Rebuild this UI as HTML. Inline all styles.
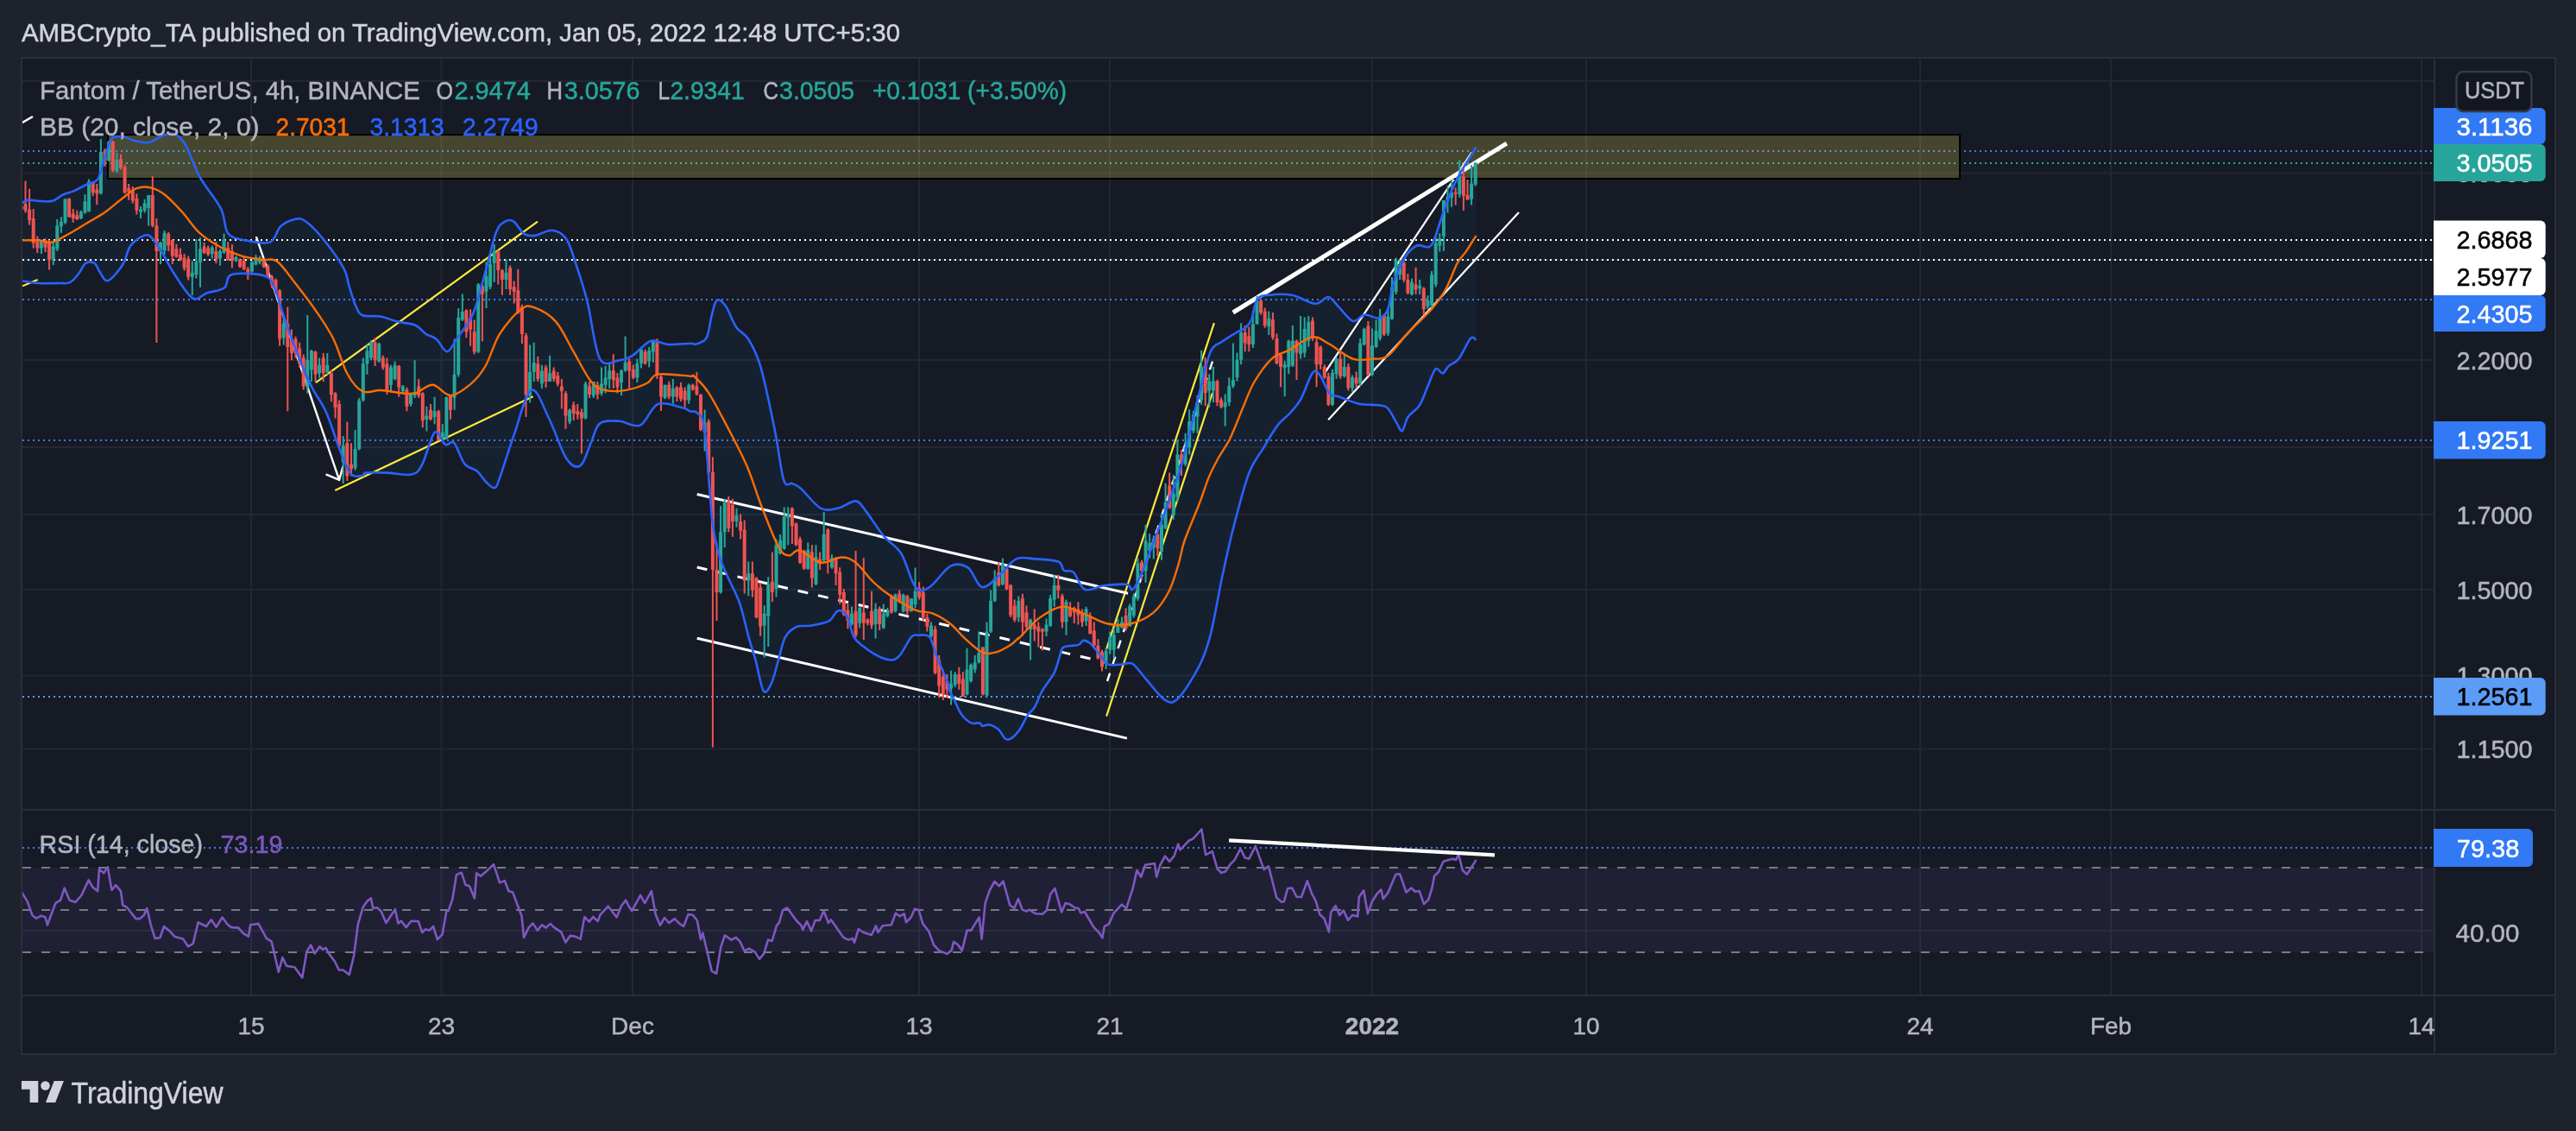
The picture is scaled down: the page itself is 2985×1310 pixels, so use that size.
<!DOCTYPE html><html><head><meta charset="utf-8"><style>html,body{margin:0;padding:0;background:#1e222d;width:2985px;height:1310px;overflow:hidden}svg{display:block;will-change:transform}text{font-family:"Liberation Sans",sans-serif}</style></head><body>
<svg width="2985" height="1310" viewBox="0 0 2985 1310">
<rect x="0" y="0" width="2985" height="1310" fill="#1e222d"/>
<rect x="25" y="67" width="2936" height="1154" fill="#161a25" stroke="#2a2e39" stroke-width="2"/>
<line x1="291" y1="68" x2="291" y2="1152" stroke="#232733" stroke-width="2"/>
<line x1="511.5" y1="68" x2="511.5" y2="1152" stroke="#232733" stroke-width="2"/>
<line x1="733" y1="68" x2="733" y2="1152" stroke="#232733" stroke-width="2"/>
<line x1="1065" y1="68" x2="1065" y2="1152" stroke="#232733" stroke-width="2"/>
<line x1="1286" y1="68" x2="1286" y2="1152" stroke="#232733" stroke-width="2"/>
<line x1="1590" y1="68" x2="1590" y2="1152" stroke="#232733" stroke-width="2"/>
<line x1="1838" y1="68" x2="1838" y2="1152" stroke="#232733" stroke-width="2"/>
<line x1="2225" y1="68" x2="2225" y2="1152" stroke="#232733" stroke-width="2"/>
<line x1="2446" y1="68" x2="2446" y2="1152" stroke="#232733" stroke-width="2"/>
<line x1="2806" y1="68" x2="2806" y2="1152" stroke="#232733" stroke-width="2"/>
<line x1="26" y1="94" x2="2820" y2="94" stroke="#232733" stroke-width="2"/>
<line x1="26" y1="200.5" x2="2820" y2="200.5" stroke="#232733" stroke-width="2"/>
<line x1="26" y1="301" x2="2820" y2="301" stroke="#232733" stroke-width="2"/>
<line x1="26" y1="417" x2="2820" y2="417" stroke="#232733" stroke-width="2"/>
<line x1="26" y1="518" x2="2820" y2="518" stroke="#232733" stroke-width="2"/>
<line x1="26" y1="596" x2="2820" y2="596" stroke="#232733" stroke-width="2"/>
<line x1="26" y1="683" x2="2820" y2="683" stroke="#232733" stroke-width="2"/>
<line x1="26" y1="782.5" x2="2820" y2="782.5" stroke="#232733" stroke-width="2"/>
<line x1="26" y1="867.5" x2="2820" y2="867.5" stroke="#232733" stroke-width="2"/>
<line x1="26" y1="1078" x2="2820" y2="1078" stroke="#232733" stroke-width="2"/>
<rect x="26" y="937" width="2934" height="2" fill="#2a2e39"/>
<rect x="26" y="1152" width="2934" height="2" fill="#2a2e39"/>
<rect x="2820" y="68" width="2" height="1152" fill="#2a2e39"/>
<defs><clipPath id="cm"><rect x="26" y="68" width="2794" height="869"/></clipPath><clipPath id="cr"><rect x="26" y="939" width="2794" height="213"/></clipPath></defs>
<g clip-path="url(#cm)">
<path d="M24.9,235.6C26.1,234.9 29.0,232.1 32.2,231.6C35.5,231.1 39.6,232.6 44.4,232.8C49.1,233.0 56.0,234.0 60.7,232.8C65.5,231.6 68.8,227.4 72.9,225.5C77.0,223.6 80.3,223.5 85.1,221.4C89.8,219.3 96.7,215.6 101.4,213.2C106.2,210.8 110.2,212.5 113.6,207.1C117.0,201.7 119.0,188.5 121.7,180.7C124.4,172.9 126.5,164.0 129.9,160.3C133.3,156.6 138.0,158.0 142.1,158.3C146.2,158.7 149.6,161.2 154.3,162.4C159.1,163.6 166.5,165.2 170.6,165.2C174.7,165.2 175.3,163.9 178.7,162.4C182.1,160.9 186.8,157.5 190.9,156.3C195.0,155.2 199.0,153.5 203.1,155.5C207.2,157.5 210.6,160.2 215.3,168.5C220.1,176.8 224.8,192.9 231.6,205.1C238.4,217.3 250.6,230.8 256.0,241.7C261.4,252.5 259.4,264.1 264.2,270.2C268.9,276.3 276.4,276.7 284.5,278.4C292.6,280.1 306.2,283.1 313.0,280.4C319.8,277.7 320.4,266.5 325.2,262.1C329.9,257.7 336.8,254.9 341.5,253.9C346.2,252.9 348.3,252.3 353.7,256.0C359.1,259.7 366.6,267.2 374.0,276.3C381.4,285.4 393.4,302.0 398.4,310.9C403.4,319.8 401.8,322.7 404.1,329.9C406.4,337.1 409.5,348.4 412.2,354.3C414.9,360.2 415.6,363.3 420.3,365.3C425.1,367.3 433.9,365.3 440.7,366.5C447.5,367.7 454.2,370.9 461.0,372.6C467.8,374.3 476.0,374.3 481.4,376.7C486.8,379.1 489.5,384.1 493.6,386.8C497.7,389.5 501.7,389.5 505.8,392.9C509.9,396.3 513.9,407.5 518.0,407.2C522.1,406.9 525.1,398.4 530.2,390.9C535.3,383.4 543.1,375.3 548.5,362.4C553.9,349.5 558.4,329.2 562.8,313.6C567.2,298.0 571.3,278.3 575.0,268.8C578.7,259.3 581.8,258.6 585.2,256.6C588.6,254.6 591.6,254.2 595.3,256.6C599.0,259.0 603.4,268.2 607.5,270.9C611.6,273.6 614.3,273.6 619.7,272.9C625.1,272.2 634.0,266.1 640.1,266.8C646.2,267.5 651.6,269.9 656.4,277.0C661.1,284.1 664.5,297.3 668.6,309.5C672.7,321.7 676.4,332.6 680.8,350.2C685.2,367.8 688.9,404.1 695.0,415.3C701.1,426.5 710.9,418.1 717.4,417.4C723.9,416.7 727.6,415.0 733.7,411.3C739.8,407.6 747.2,397.1 754.0,395.0C760.8,392.9 766.7,398.5 774.4,399.0C782.1,399.5 794.6,397.9 800.0,397.8C805.4,397.7 803.4,399.6 806.5,398.5C809.6,397.4 815.7,396.8 818.7,391.2C821.8,385.6 822.8,372.1 824.8,364.8C826.8,357.6 828.2,349.4 830.9,347.7C833.6,346.0 837.3,349.4 841.0,354.6C844.7,359.8 848.8,372.6 853.2,379.0C857.6,385.4 862.8,385.4 867.5,393.2C872.2,401.0 876.6,408.2 881.7,425.8C886.8,443.4 893.6,477.3 898.0,499.0C902.4,520.7 904.8,545.8 908.2,556.0C911.6,566.2 914.9,558.4 918.3,560.1C921.7,561.8 923.1,561.5 928.5,566.2C933.9,571.0 943.8,584.9 950.9,588.6C958.0,592.3 964.5,590.0 971.3,588.6C978.1,587.2 986.2,579.7 991.6,580.4C997.0,581.1 998.4,585.8 1003.8,592.6C1009.2,599.4 1017.4,613.0 1024.2,621.1C1031.0,629.2 1038.4,631.7 1044.5,641.5C1050.6,651.3 1055.4,673.7 1060.8,680.1C1066.2,686.5 1070.3,684.2 1077.1,680.1C1083.9,676.0 1094.0,659.4 1101.5,655.7C1109.0,652.0 1115.7,653.6 1121.8,657.7C1127.9,661.8 1132.0,678.7 1138.1,680.1C1144.2,681.5 1151.8,671.4 1158.4,665.9C1165.0,660.4 1170.8,650.5 1177.7,647.4C1184.6,644.3 1191.7,646.9 1199.8,647.4C1207.9,647.9 1220.8,648.3 1226.3,650.5C1231.8,652.7 1230.0,658.6 1232.9,660.7C1235.9,662.8 1240.0,659.2 1244.0,662.9C1248.0,666.6 1251.3,680.2 1257.2,682.8C1263.1,685.4 1271.2,679.3 1279.3,678.3C1287.4,677.3 1300.4,676.2 1305.9,677.0C1311.4,677.8 1309.6,685.1 1312.5,682.8C1315.4,680.4 1319.5,672.1 1323.5,662.9C1327.5,653.7 1332.4,639.3 1336.8,627.5C1341.2,615.7 1344.9,606.2 1350.1,592.2C1355.2,578.2 1362.5,560.5 1367.7,543.5C1372.9,526.5 1377.0,506.7 1381.0,490.5C1385.0,474.3 1388.3,460.3 1392.0,446.3C1395.7,432.3 1399.0,415.0 1403.1,406.5C1407.2,398.0 1411.2,399.2 1416.4,395.5C1421.6,391.8 1429.6,387.0 1434.0,384.4C1438.4,381.8 1440.2,382.4 1442.9,380.0C1445.6,377.6 1447.8,375.9 1450.1,370.3C1452.4,364.8 1453.4,351.5 1456.8,346.7C1460.2,341.9 1463.6,342.5 1470.3,341.7C1477.0,340.9 1488.1,340.0 1497.1,341.7C1506.0,343.4 1517.0,351.4 1524.0,351.8C1531.0,352.2 1534.7,343.4 1539.2,344.0C1543.7,344.6 1546.2,350.5 1550.9,355.1C1555.7,359.8 1562.7,370.3 1567.7,371.9C1572.8,373.5 1576.2,365.1 1581.2,364.5C1586.2,363.9 1593.5,369.6 1598.0,368.6C1602.5,367.6 1605.3,365.2 1608.1,358.5C1610.9,351.8 1611.4,338.3 1614.8,328.2C1618.2,318.1 1623.7,305.3 1628.2,298.0C1632.7,290.7 1637.2,286.5 1641.7,284.5C1646.2,282.5 1651.8,287.3 1655.1,286.2C1658.4,285.1 1659.0,284.2 1661.8,277.8C1664.6,271.4 1668.5,257.1 1671.9,247.6C1675.3,238.1 1678.6,228.5 1682.0,220.7C1685.4,212.8 1688.7,206.7 1692.1,200.5C1695.5,194.3 1699.1,188.7 1702.2,183.7C1705.3,178.7 1709.2,172.5 1710.6,170.3 L1710.6,393.8 1710.6,393.8C1709.5,393.5 1707.3,388.5 1703.9,392.1C1700.5,395.7 1694.6,410.3 1690.4,415.6C1686.2,420.9 1681.8,421.2 1678.7,424.0C1675.6,426.8 1674.4,431.8 1671.9,432.4C1669.4,433.0 1666.3,425.1 1663.5,427.4C1660.7,429.6 1658.2,438.9 1655.1,445.9C1652.0,452.9 1648.9,463.2 1645.0,469.4C1641.1,475.6 1634.9,478.0 1631.6,482.9C1628.2,487.8 1627.1,497.9 1624.9,499.0C1622.7,500.1 1621.0,494.0 1618.2,489.6C1615.4,485.2 1611.5,476.2 1608.1,472.8C1604.7,469.4 1603.6,470.2 1598.0,469.4C1592.4,468.5 1582.3,469.4 1574.5,467.7C1566.7,466.0 1556.5,461.2 1550.9,459.3C1545.3,457.4 1544.4,460.2 1540.8,456.0C1537.2,451.8 1532.4,438.0 1529.1,434.1C1525.8,430.2 1524.3,427.6 1520.7,432.4C1517.1,437.2 1511.7,454.8 1507.2,462.7C1502.7,470.6 1498.3,474.5 1493.8,479.5C1489.3,484.5 1485.3,486.2 1480.3,492.9C1475.2,499.6 1469.0,510.6 1463.5,519.8C1458.0,529.0 1453.0,533.0 1447.3,548.0C1441.6,563.0 1434.8,589.9 1429.6,609.8C1424.4,629.7 1420.8,646.7 1416.4,667.3C1412.0,687.9 1407.5,716.3 1403.1,733.6C1398.7,750.9 1396.1,758.7 1389.8,771.2C1383.5,783.7 1372.1,802.1 1365.5,808.7C1358.9,815.3 1356.3,814.6 1350.1,810.9C1343.8,807.2 1334.3,793.6 1328.0,786.6C1321.7,779.6 1317.2,771.9 1312.5,769.0C1307.8,766.1 1303.8,769.3 1300.0,769.5C1296.2,769.7 1292.4,770.3 1289.5,770.2C1286.6,770.1 1284.8,770.6 1282.5,768.8C1280.2,767.0 1277.5,762.3 1275.4,759.6C1273.3,756.9 1271.8,755.0 1269.7,752.5C1267.6,750.0 1265.1,746.6 1262.7,744.8C1260.3,743.0 1257.7,741.5 1255.6,741.9C1253.5,742.2 1252.7,745.8 1249.9,746.9C1247.1,748.0 1241.7,747.7 1238.6,748.3C1235.5,748.9 1233.4,748.0 1231.5,750.4C1229.6,752.8 1229.0,757.6 1227.3,762.4C1225.6,767.2 1224.9,773.0 1221.6,779.4C1218.3,785.8 1211.3,794.0 1207.5,800.6C1203.7,807.2 1201.8,814.3 1199.0,819.0C1196.2,823.7 1193.3,824.6 1190.5,828.9C1187.7,833.1 1185.1,840.1 1182.0,844.5C1178.9,848.9 1174.9,853.2 1172.1,855.1C1169.3,857.0 1167.7,857.6 1165.1,855.8C1162.5,854.0 1159.7,847.2 1156.6,844.5C1153.5,841.8 1149.8,840.1 1146.7,839.5C1143.6,838.9 1140.1,841.2 1138.2,840.9C1136.3,840.5 1137.5,838.0 1135.4,837.4C1133.3,836.8 1129.0,839.0 1125.5,837.4C1122.0,835.8 1117.4,832.0 1114.1,827.5C1110.8,823.0 1108.0,815.2 1105.7,810.5C1103.4,805.8 1101.2,802.5 1100.0,799.2C1098.8,796.0 1100.8,797.7 1098.3,791.0C1095.8,784.3 1088.5,768.1 1085.0,759.2C1081.5,750.4 1080.6,741.8 1077.1,737.9C1073.6,734.0 1067.3,735.8 1063.8,735.8C1060.3,735.8 1059.4,734.0 1055.9,737.9C1052.4,741.8 1046.6,754.8 1042.6,759.2C1038.6,763.6 1036.4,764.5 1032.0,764.5C1027.6,764.5 1021.4,761.9 1016.1,759.2C1010.8,756.5 1004.6,752.0 1000.2,748.5C995.8,745.0 992.6,743.6 989.5,737.9C986.4,732.2 984.7,719.2 981.6,714.1C978.5,709.0 974.5,706.5 971.0,707.4C967.5,708.3 965.7,716.5 960.4,719.4C955.1,722.3 945.4,723.6 939.2,724.7C933.0,725.8 928.1,723.8 923.2,726.0C918.3,728.2 913.5,731.5 910.0,737.9C906.5,744.3 904.6,755.6 902.0,764.5C899.4,773.4 897.0,785.0 894.1,791.0C891.2,797.0 887.9,804.7 884.8,800.3C881.7,795.9 878.4,774.9 875.5,764.5C872.6,754.1 870.6,749.0 867.5,737.9C864.4,726.8 860.9,709.6 856.9,698.1C852.9,686.6 847.7,678.3 843.7,669.0C839.7,659.7 836.1,653.9 833.0,642.4C829.9,630.9 827.8,623.9 825.1,600.0C822.4,576.1 819.4,519.2 816.6,499.0C813.8,478.8 811.3,482.5 808.5,478.7C805.7,474.9 803.0,477.5 800.0,476.4C797.0,475.3 796.9,473.7 790.6,472.3C784.3,470.9 770.3,464.8 762.2,468.2C754.1,471.6 749.3,489.3 741.8,492.6C734.3,495.9 725.2,488.1 717.4,487.8C709.6,487.5 700.4,486.4 695.0,490.6C689.6,494.8 688.5,504.9 684.8,513.0C681.1,521.1 677.3,536.4 672.6,539.4C667.9,542.4 662.5,540.4 656.4,531.3C650.3,522.1 642.8,497.7 636.0,484.5C629.2,471.3 622.5,448.5 615.7,451.9C608.9,455.3 601.4,487.8 595.3,504.8C589.2,521.8 582.7,543.7 579.0,553.7C575.3,563.8 575.6,564.4 572.9,565.1C570.2,565.8 566.2,561.0 562.8,557.7C559.4,554.4 556.7,548.9 552.6,545.5C548.5,542.1 542.8,542.8 538.4,537.4C534.0,532.0 529.8,516.7 526.1,513.0C522.4,509.3 519.7,517.0 516.0,515.0C512.3,513.0 508.2,497.1 503.8,500.8C499.4,504.5 493.9,529.3 489.5,537.4C485.1,545.5 484.1,547.9 477.3,549.6C470.5,551.3 457.6,547.9 448.8,547.6C440.0,547.3 429.2,547.0 424.4,547.6C419.6,548.2 423.0,550.8 420.0,551.0C417.0,551.2 410.9,553.8 406.6,549.0C402.3,544.2 399.1,534.4 394.4,522.5C389.6,510.6 383.5,489.9 378.1,477.7C372.7,465.5 367.2,460.1 361.8,449.3C356.4,438.5 350.9,426.2 345.5,412.6C340.1,399.0 334.0,381.4 329.3,367.9C324.6,354.3 321.2,339.4 317.1,331.3C313.0,323.2 313.0,321.2 304.8,319.0C296.6,316.8 275.6,315.8 268.2,318.2C260.8,320.6 264.9,329.8 260.1,333.3C255.4,336.8 245.8,337.4 239.7,339.4C233.6,341.4 229.6,348.9 223.5,345.5C217.4,342.1 209.2,328.1 203.1,319.0C197.0,309.9 191.2,297.7 186.8,290.6C182.4,283.5 179.4,279.4 176.7,276.3C174.0,273.2 173.3,272.2 170.6,272.2C167.9,272.2 163.8,273.9 160.4,276.3C157.0,278.7 153.2,281.4 150.2,286.5C147.1,291.6 146.3,300.4 142.1,306.8C137.9,313.2 129.4,323.7 125.0,325.1C120.6,326.5 118.2,318.4 115.6,315.0C113.0,311.6 112.2,306.5 109.5,304.8C106.8,303.1 102.3,302.8 99.3,304.8C96.2,306.8 94.2,313.3 91.2,317.0C88.2,320.7 84.7,325.4 81.0,327.2C77.3,329.0 74.9,327.9 68.8,328.0C62.7,328.1 51.7,328.5 44.4,328.0C37.1,327.5 28.1,325.6 24.9,325.1Z" fill="#2196f3" fill-opacity="0.06"/>
<line x1="26" y1="175" x2="2820" y2="175" stroke="#3d7bf5" stroke-width="2" stroke-dasharray="2 4"/>
<line x1="26" y1="189" x2="2820" y2="189" stroke="#22ab94" stroke-width="2" stroke-dasharray="2 4"/>
<line x1="26" y1="510" x2="2820" y2="510" stroke="#3d7bf5" stroke-width="2" stroke-dasharray="2 4"/>
<line x1="26" y1="807" x2="2820" y2="807" stroke="#5a9cf8" stroke-width="2" stroke-dasharray="2 4"/>
<line x1="26" y1="347" x2="2820" y2="347" stroke="#3d7bf5" stroke-width="2" stroke-dasharray="2 4"/>
<line x1="26" y1="278" x2="2820" y2="278" stroke="#ffffff" stroke-width="2" stroke-dasharray="2 4"/>
<line x1="26" y1="301" x2="2820" y2="301" stroke="#ffffff" stroke-width="2" stroke-dasharray="2 4"/>
<line x1="365.9" y1="443.2" x2="623" y2="256.6" stroke="#ffeb3b" stroke-width="2.2"/>
<line x1="388.3" y1="568" x2="617.7" y2="459.3" stroke="#ffeb3b" stroke-width="2.2"/>
<line x1="1282.1" y1="751.9" x2="1406.9" y2="374.2" stroke="#ffeb3b" stroke-width="2.2"/>
<line x1="1282.1" y1="829.6" x2="1405" y2="455" stroke="#ffeb3b" stroke-width="2.2"/>
<line x1="26.1" y1="331.3" x2="43.6" y2="324" stroke="#ffeb3b" stroke-width="2.2"/>
<line x1="807.7" y1="572.5" x2="1307" y2="687.2" stroke="#ffffff" stroke-width="3"/>
<line x1="807.7" y1="739.3" x2="1305.9" y2="855.1" stroke="#ffffff" stroke-width="3"/>
<line x1="1535.8" y1="430.8" x2="1705.5" y2="176.3" stroke="#ffffff" stroke-width="2.2"/>
<line x1="1539.2" y1="486.2" x2="1760" y2="245.9" stroke="#ffffff" stroke-width="2.2"/>
<line x1="807.7" y1="657" x2="1280.5" y2="767" stroke="#ffffff" stroke-width="3" stroke-dasharray="12 12"/>
<line x1="1283" y1="789" x2="1407.5" y2="411" stroke="#ffffff" stroke-width="2.4" stroke-dasharray="10 10"/>
<path d="M296.9 274.2L393.1 555.8M377.6 549.3L393.1 555.8L397.5 540" stroke="#fff" stroke-width="2.4" fill="none"/>
<line x1="26" y1="142" x2="38" y2="135" stroke="#fff" stroke-width="2.4"/>
<rect x="125" y="156" width="2146" height="51" fill="#f0e050" fill-opacity="0.22" stroke="#000" stroke-width="2"/>
<line x1="1428.8" y1="362" x2="1745.9" y2="166.2" stroke="#ffffff" stroke-width="5"/>
<path d="M24.9 237.5V247.0M47.9 277.2V293.9M61.7 279.9V306.9M66.3 254.0V291.1M70.9 251.2V269.7M75.5 229.8V259.5M93.9 243.7V254.0M98.5 225.2V247.5M103.1 207.5V245.6M116.9 161.1V225.2M126.2 163.0V187.1M135.4 176.9V200.1M163.0 239.1V253.0M167.6 230.7V246.5M172.2 226.1V261.4M186.0 279.9V305.9M190.6 266.9V294.8M222.8 302.2V342.1M227.4 277.2V322.6M232.0 275.3V332.8M245.8 284.6V299.4M255.0 288.4V307.6M259.6 270.6V293.9M273.5 296.6V303.5M291.9 302.1V315.8M296.5 295.2V307.6M301.1 296.6V306.2M328.7 367.9V399.4M356.3 365.1V455.6M360.9 404.9V441.9M370.1 414.5V437.8M379.3 409.0V433.7M397.7 504.9V560.0M411.6 498.1V544.7M416.2 461.1V521.4M420.8 414.5V465.2M425.4 399.4V433.7M430.0 393.9V417.2M439.2 396.7V420.0M453.0 422.7V454.2M457.6 418.6V440.5M466.8 446.0V457.0M476.0 455.6V470.7M480.6 417.2V461.1M494.4 470.7V499.5M503.6 459.7V491.2M512.8 491.2V511.8M517.4 459.7V509.0M526.6 392.5V474.8M531.2 356.9V436.4M535.8 340.5V372.0M554.3 328.1V409.0M563.5 303.5V356.9M568.1 298.0V335.0M572.7 282.9V326.8M586.5 300.7V335.0M614.1 399.4V466.6M618.7 396.7V441.9M627.9 422.7V450.1M637.1 411.7V441.9M660.1 473.4V491.2M678.5 441.9V485.7M687.8 441.9V461.1M697.0 425.4V458.3M701.6 423.9V455.4M706.2 421.1V449.9M720.0 428.0V458.1M724.6 389.6V430.7M738.4 415.6V443.0M743.0 403.3V426.6M752.2 401.9V425.2M756.8 393.7V419.7M770.6 445.8V462.2M779.8 438.9V467.7M798.2 444.4V467.7M816.6 474.6V522.5M835.1 586.0V687.5M839.7 577.8V634.0M853.5 588.8V610.7M867.3 650.5V690.2M885.7 701.2V761.5M890.3 668.3V749.1M899.5 624.4V691.6M904.1 618.9V642.2M908.7 587.4V636.8M913.3 587.4V631.3M936.3 628.5V660.1M945.5 631.3V677.9M954.7 592.9V650.5M964.0 642.2V658.7M987.0 702.5V724.5M996.2 702.5V727.2M1014.6 698.4V739.6M1023.8 699.8V728.6M1028.4 703.9V714.9M1037.6 687.5V709.4M1046.8 687.7V709.6M1056.0 693.2V708.3M1060.6 657.6V704.2M1079.0 720.6V738.4M1102.1 776.8V816.6M1106.7 778.2V796.0M1120.5 750.8V805.6M1125.1 768.6V790.5M1129.7 759.0V779.6M1134.3 731.6V768.6M1143.5 720.6V807.0M1148.1 683.6V732.9M1152.7 660.3V697.3M1161.9 646.6V678.1M1180.3 690.5V720.6M1194.1 716.5V764.5M1212.5 716.5V737.1M1217.1 689.1V726.1M1221.7 665.8V702.8M1235.5 694.6V735.7M1258.6 702.8V724.7M1281.6 750.2V775.0M1286.2 731.7V757.7M1290.8 728.0V762.6M1295.4 716.8V732.9M1300.0 714.4V728.0M1309.2 699.5V725.5M1313.8 687.2V715.6M1318.4 646.4V695.8M1327.6 608.0V674.8M1332.2 617.9V646.4M1336.8 620.4V647.6M1346.0 594.4V648.8M1350.6 559.8V613.0M1359.8 549.9V601.8M1364.4 510.0V581.2M1373.6 501.7V540.1M1378.2 474.3V526.4M1382.9 475.7V501.7M1387.5 457.9V501.7M1392.1 405.8V468.8M1401.3 433.2V471.6M1405.9 425.0V466.1M1419.7 456.5V493.5M1424.3 437.3V470.2M1428.9 397.6V449.6M1433.5 408.5V441.4M1438.1 374.3V422.2M1451.9 360.6V403.0M1456.5 342.7V375.6M1470.3 360.6V388.0M1488.7 418.1V459.2M1493.3 393.5V433.2M1497.9 377.0V425.0M1507.1 366.0V415.4M1511.7 367.4V414.0M1516.3 366.0V401.7M1544.0 427.7V470.2M1548.6 414.0V438.7M1557.8 409.9V437.3M1567.0 434.6V453.8M1576.2 392.1V446.9M1580.8 379.7V400.3M1590.0 380.5V435.6M1594.6 370.6V403.1M1599.2 357.9V394.6M1608.4 357.9V389.0M1613.0 321.1V370.6M1617.6 298.5V340.9M1622.2 301.3V324.0M1636.0 322.5V342.3M1645.2 324.0V340.9M1654.4 342.3V357.9M1659.0 314.1V357.9M1663.7 274.5V332.4M1668.3 270.2V291.4M1672.9 232.0V290.8M1677.5 215.0V246.4M1682.1 207.9V239.7M1691.3 184.9V228.7M1705.1 191.1V237.5M1709.7 188.0V215.4" stroke="#26a69a" stroke-width="2" fill="none"/>
<path d="M22.9 239.3h4V242.3h-4zM45.9 278.1h4V287.4h-4zM59.7 285.5h4V300.4h-4zM64.3 261.4h4V288.3h-4zM68.9 256.7h4V262.3h-4zM73.5 230.7h4V257.7h-4zM91.9 245.6h4V253.0h-4zM96.5 233.5h4V246.5h-4zM101.1 210.3h4V244.7h-4zM114.9 176.0h4V224.3h-4zM124.2 163.9h4V186.2h-4zM133.4 185.3h4V198.3h-4zM161.0 242.8h4V245.6h-4zM165.6 235.4h4V243.7h-4zM170.2 226.1h4V241.0h-4zM184.0 280.9h4V291.1h-4zM188.6 269.7h4V290.2h-4zM220.8 316.1h4V320.8h-4zM225.4 303.1h4V318.0h-4zM230.0 288.3h4V304.1h-4zM243.8 286.4h4V293.9h-4zM253.0 291.1h4V299.3h-4zM257.6 277.4h4V292.5h-4zM271.5 298.0h4V302.1h-4zM289.9 303.5h4V314.4h-4zM294.5 298.0h4V306.2h-4zM299.1 299.3h4V303.5h-4zM326.7 374.7h4V391.2h-4zM354.3 417.2h4V447.4h-4zM358.9 406.2h4V428.2h-4zM368.1 422.7h4V432.3h-4zM377.3 422.7h4V430.9h-4zM395.7 515.9h4V535.1h-4zM409.6 520.0h4V541.9h-4zM414.2 463.8h4V520.0h-4zM418.8 421.3h4V463.8h-4zM423.4 406.2h4V421.3h-4zM428.0 396.7h4V414.5h-4zM437.2 398.0h4V418.6h-4zM451.0 425.4h4V446.0h-4zM455.6 422.7h4V439.1h-4zM464.8 447.4h4V452.9h-4zM474.0 457.0h4V467.9h-4zM478.6 454.2h4V458.3h-4zM492.4 481.6h4V485.7h-4zM501.6 476.2h4V483.0h-4zM510.8 500.8h4V509.0h-4zM515.4 459.7h4V507.7h-4zM524.6 433.7h4V461.1h-4zM529.2 367.9h4V433.7h-4zM533.8 361.0h4V370.6h-4zM552.3 329.5h4V407.6h-4zM561.5 319.9h4V337.7h-4zM566.1 306.2h4V332.2h-4zM570.7 291.1h4V304.8h-4zM584.5 315.8h4V324.0h-4zM612.1 430.9h4V458.3h-4zM616.7 420.0h4V430.9h-4zM625.9 429.6h4V444.6h-4zM635.1 432.3h4V441.9h-4zM658.1 474.8h4V488.5h-4zM676.5 444.6h4V484.4h-4zM685.8 441.9h4V458.3h-4zM695.0 444.6h4V455.6h-4zM699.6 437.6h4V445.8h-4zM704.2 429.3h4V438.9h-4zM718.0 429.3h4V443.0h-4zM722.6 419.7h4V429.3h-4zM736.4 421.1h4V437.6h-4zM741.0 404.7h4V421.1h-4zM750.2 406.0h4V418.4h-4zM754.8 395.1h4V407.4h-4zM768.6 445.8h4V460.9h-4zM777.8 449.9h4V459.5h-4zM796.2 445.8h4V463.6h-4zM814.6 489.6h4V500.6h-4zM833.1 616.2h4V686.1h-4zM837.7 581.9h4V616.2h-4zM851.5 597.0h4V603.9h-4zM865.3 664.2h4V672.4h-4zM883.7 710.8h4V724.5h-4zM888.3 676.5h4V713.5h-4zM897.5 631.3h4V682.0h-4zM902.1 625.8h4V640.9h-4zM906.7 598.4h4V635.4h-4zM911.3 595.6h4V599.7h-4zM934.3 636.8h4V658.7h-4zM943.5 645.0h4V676.5h-4zM952.7 618.9h4V649.1h-4zM962.0 646.3h4V657.3h-4zM985.0 710.8h4V723.1h-4zM994.2 703.9h4V721.7h-4zM1012.6 705.3h4V723.1h-4zM1021.8 710.8h4V727.2h-4zM1026.4 708.0h4V713.5h-4zM1035.6 688.8h4V708.0h-4zM1044.8 689.1h4V708.3h-4zM1054.0 693.2h4V708.3h-4zM1058.6 685.0h4V700.1h-4zM1077.0 724.7h4V737.1h-4zM1100.1 791.9h4V797.4h-4zM1104.7 780.9h4V793.3h-4zM1118.5 775.4h4V804.2h-4zM1123.1 770.0h4V789.1h-4zM1127.7 767.2h4V775.4h-4zM1132.3 756.2h4V767.2h-4zM1141.5 731.6h4V805.6h-4zM1146.1 695.9h4V731.6h-4zM1150.7 669.9h4V695.9h-4zM1159.9 653.5h4V676.8h-4zM1178.3 695.9h4V715.1h-4zM1192.1 717.9h4V728.8h-4zM1210.5 723.4h4V731.6h-4zM1215.1 693.2h4V724.7h-4zM1219.7 678.1h4V694.6h-4zM1233.5 697.3h4V720.6h-4zM1256.6 705.5h4V719.2h-4zM1279.6 754.0h4V767.6h-4zM1284.2 737.9h4V752.7h-4zM1288.8 735.4h4V752.7h-4zM1293.4 723.0h4V732.9h-4zM1298.0 720.6h4V726.7h-4zM1307.2 702.0h4V725.5h-4zM1311.8 690.9h4V713.1h-4zM1316.4 652.5h4V693.4h-4zM1325.6 626.6h4V661.2h-4zM1330.2 629.0h4V637.7h-4zM1334.8 624.1h4V634.0h-4zM1344.0 608.0h4V638.9h-4zM1348.6 582.0h4V611.7h-4zM1357.8 572.2h4V596.9h-4zM1362.4 526.4h4V575.7h-4zM1371.6 518.2h4V537.4h-4zM1376.2 488.0h4V518.2h-4zM1380.9 479.8h4V499.0h-4zM1385.5 466.1h4V482.5h-4zM1390.1 425.0h4V463.4h-4zM1399.3 441.4h4V452.4h-4zM1403.9 441.4h4V452.4h-4zM1417.7 466.1h4V471.6h-4zM1422.3 446.9h4V466.1h-4zM1426.9 440.1h4V446.9h-4zM1431.5 416.8h4V437.3h-4zM1436.1 385.2h4V416.8h-4zM1449.9 375.6h4V398.9h-4zM1454.5 348.2h4V375.6h-4zM1468.3 368.8h4V378.4h-4zM1486.7 422.2h4V426.3h-4zM1491.3 394.8h4V425.0h-4zM1495.9 394.8h4V423.6h-4zM1505.1 398.9h4V409.9h-4zM1509.7 381.1h4V408.5h-4zM1514.3 372.9h4V394.8h-4zM1542.0 431.8h4V468.8h-4zM1546.6 415.4h4V433.2h-4zM1555.8 425.0h4V435.9h-4zM1565.0 437.3h4V449.6h-4zM1574.2 397.6h4V444.2h-4zM1578.8 381.1h4V398.9h-4zM1588.0 400.3h4V434.2h-4zM1592.6 383.3h4V401.7h-4zM1597.2 366.4h4V391.8h-4zM1606.4 366.4h4V386.1h-4zM1611.0 332.4h4V369.2h-4zM1615.6 301.3h4V338.1h-4zM1620.2 307.0h4V318.3h-4zM1634.0 326.8h4V340.9h-4zM1643.2 331.0h4V333.9h-4zM1652.4 348.0h4V355.1h-4zM1657.0 318.3h4V353.6h-4zM1661.7 281.6h4V329.6h-4zM1666.3 275.9h4V284.4h-4zM1670.9 232.0h4V273.8h-4zM1675.5 227.8h4V232.8h-4zM1680.1 223.0h4V229.0h-4zM1689.3 203.9h4V225.0h-4zM1703.1 212.8h4V230.4h-4zM1707.7 188.5h4V213.7h-4z" fill="#26a69a"/>
<path d="M29.5 209.4V246.5M34.1 218.7V260.5M38.7 241.9V287.4M43.3 273.4V292.9M52.5 276.2V292.0M57.1 278.1V312.4M80.1 229.8V252.1M84.7 241.9V257.7M89.3 243.7V254.9M107.7 210.3V227.0M112.3 213.1V237.2M121.5 172.3V192.7M130.8 163.0V199.2M140.0 178.8V196.4M144.6 190.8V224.3M149.2 213.1V231.7M153.8 215.9V235.4M158.4 224.3V248.4M176.8 203.8V263.2M181.4 253.0V396.9M195.2 268.8V291.1M199.8 277.2V305.9M204.4 282.7V298.5M209.0 287.4V302.2M213.6 293.9V313.4M218.2 296.6V324.5M236.6 280.9V293.9M241.2 284.6V296.6M250.4 279.9V305.0M264.2 280.2V302.1M268.9 282.9V310.3M278.1 299.3V310.3M282.7 298.0V313.0M287.3 308.9V324.0M305.7 299.3V310.3M310.3 306.2V321.3M314.9 318.5V333.6M319.5 322.6V341.8M324.1 335.0V400.8M333.3 355.5V476.2M337.9 381.6V417.2M342.5 389.8V414.5M347.1 396.7V425.4M351.7 410.4V451.5M365.5 406.2V441.9M374.7 409.0V441.9M383.9 428.2V465.2M388.5 454.2V484.4M393.1 463.8V520.0M402.3 488.5V557.0M407.0 513.2V551.5M434.6 391.2V424.1M443.8 411.7V428.2M448.4 414.5V457.0M462.2 422.7V459.7M471.4 448.7V476.2M485.2 439.1V461.1M489.8 454.2V495.3M499.0 467.9V487.1M508.2 474.8V510.4M522.0 458.3V485.7M540.4 358.3V391.2M545.1 358.3V400.8M549.7 370.6V410.4M558.9 329.5V395.3M577.3 289.7V329.5M581.9 311.7V341.8M591.1 307.6V341.8M595.7 325.4V351.4M600.3 311.7V363.8M604.9 352.8V398.0M609.5 385.7V483.0M623.3 413.1V441.9M632.5 422.7V448.7M641.7 425.4V441.9M646.3 430.9V447.4M650.9 439.1V473.4M655.5 452.9V496.7M664.7 465.2V487.1M669.3 467.9V485.7M673.9 473.4V525.5M683.1 441.9V461.1M692.4 441.9V462.4M710.8 410.2V449.9M715.4 432.1V455.4M729.2 415.6V449.9M733.8 422.5V438.9M747.6 404.7V422.5M761.4 392.3V438.9M766.0 434.8V475.9M775.2 441.7V462.2M784.4 447.2V465.0M789.0 443.0V465.0M793.6 448.5V471.8M802.8 444.4V452.6M807.4 430.7V458.1M812.0 456.8V499.2M821.2 485.5V548.6M825.9 529.3V865.6M830.5 628.5V719.0M844.3 575.1V616.2M848.9 577.8V621.7M858.1 595.6V624.4M862.7 602.5V687.5M871.9 650.5V691.6M876.5 668.3V716.2M881.1 675.1V736.8M894.9 639.5V697.1M917.9 587.4V629.9M922.5 605.2V632.6M927.1 621.7V653.2M931.7 636.8V660.1M940.9 631.3V680.6M950.1 639.5V660.1M959.3 612.1V664.2M968.6 645.0V677.9M973.2 657.3V699.8M977.8 682.0V713.5M982.4 699.8V728.6M991.6 638.1V738.2M1000.8 646.3V740.9M1005.4 716.2V724.5M1010.0 684.7V728.6M1019.2 702.5V730.0M1033.0 688.8V710.8M1042.2 683.4V698.4M1051.4 689.1V712.4M1065.2 674.0V694.6M1069.8 679.5V719.2M1074.4 711.0V731.6M1083.6 724.7V780.9M1088.2 759.0V808.3M1092.8 775.4V811.1M1097.4 780.9V808.3M1111.3 772.7V798.7M1115.9 778.2V807.0M1138.9 749.4V805.6M1157.3 650.7V679.5M1166.5 656.2V683.6M1171.1 676.8V715.1M1175.7 694.6V720.6M1184.9 687.7V737.1M1189.5 701.4V728.8M1198.7 705.5V742.5M1203.3 720.6V749.4M1207.9 727.5V753.5M1226.3 665.8V693.2M1230.9 687.7V727.5M1240.1 697.3V715.1M1244.8 702.8V722.0M1249.4 697.3V723.4M1254.0 705.5V726.1M1263.2 709.6V734.3M1267.8 720.6V751.5M1272.4 740.3V763.8M1277.0 752.7V777.4M1304.6 704.5V730.5M1323.0 648.8V671.1M1341.4 610.5V643.9M1355.2 547.4V589.5M1369.0 520.9V551.1M1396.7 414.0V470.2M1410.5 440.1V470.2M1415.1 460.6V472.9M1442.7 377.0V407.2M1447.3 378.4V407.2M1461.1 346.9V364.7M1465.7 356.4V379.7M1474.9 361.9V393.5M1479.5 386.6V422.2M1484.1 409.9V448.3M1502.5 393.5V440.1M1521.0 367.4V394.8M1525.6 392.1V448.3M1530.2 400.3V427.7M1534.8 422.2V438.7M1539.4 431.8V470.2M1553.2 408.5V438.7M1562.4 420.9V452.4M1571.6 430.5V449.6M1585.4 372.0V435.6M1603.8 363.5V389.0M1626.8 302.8V326.8M1631.4 316.9V340.9M1640.6 309.8V340.9M1649.8 332.4V364.9M1686.7 217.2V237.5M1695.9 194.2V243.7M1700.5 208.0V231.4" stroke="#ef5350" stroke-width="2" fill="none"/>
<path d="M27.5 236.3h4V243.7h-4zM32.1 242.8h4V254.9h-4zM36.7 253.0h4V281.8h-4zM41.3 279.9h4V287.4h-4zM50.5 278.1h4V286.4h-4zM55.1 279.9h4V300.4h-4zM78.1 229.8h4V251.2h-4zM82.7 247.5h4V253.0h-4zM87.3 249.3h4V254.0h-4zM105.7 211.3h4V223.3h-4zM110.3 219.6h4V224.3h-4zM119.5 175.1h4V186.2h-4zM128.8 163.9h4V197.3h-4zM138.0 184.3h4V194.6h-4zM142.6 193.6h4V223.3h-4zM147.2 217.8h4V222.4h-4zM151.8 221.5h4V232.6h-4zM156.4 229.8h4V243.7h-4zM174.8 226.1h4V261.4h-4zM179.4 261.4h4V291.1h-4zM193.2 270.7h4V284.6h-4zM197.8 278.1h4V296.6h-4zM202.4 288.3h4V297.6h-4zM207.0 294.8h4V301.3h-4zM211.6 298.5h4V310.6h-4zM216.2 300.4h4V320.8h-4zM234.6 285.5h4V292.9h-4zM239.2 287.4h4V294.8h-4zM248.4 291.1h4V300.4h-4zM262.2 287.0h4V300.7h-4zM266.9 291.1h4V302.1h-4zM276.1 300.7h4V308.9h-4zM280.7 302.1h4V311.7h-4zM285.3 311.7h4V315.8h-4zM303.7 300.7h4V308.9h-4zM308.3 307.6h4V319.9h-4zM312.9 319.9h4V329.5h-4zM317.5 324.0h4V339.1h-4zM322.1 336.3h4V392.5h-4zM331.3 374.7h4V402.1h-4zM335.9 392.5h4V409.0h-4zM340.5 392.5h4V409.0h-4zM345.1 403.5h4V420.0h-4zM349.7 414.5h4V447.4h-4zM363.5 407.6h4V433.7h-4zM372.7 414.5h4V432.3h-4zM381.9 432.3h4V457.0h-4zM386.5 455.6h4V472.0h-4zM391.1 467.9h4V515.9h-4zM400.3 513.2h4V551.5h-4zM405.0 537.8h4V543.3h-4zM432.6 396.7h4V417.2h-4zM441.8 414.5h4V425.4h-4zM446.4 421.3h4V452.9h-4zM460.2 424.1h4V448.7h-4zM469.4 451.5h4V470.7h-4zM483.2 447.4h4V458.3h-4zM487.8 455.6h4V487.1h-4zM497.0 474.8h4V485.7h-4zM506.2 476.2h4V509.0h-4zM520.0 458.3h4V474.8h-4zM538.4 359.6h4V384.3h-4zM543.1 367.9h4V381.6h-4zM547.7 384.3h4V407.6h-4zM556.9 330.9h4V340.5h-4zM575.3 291.1h4V313.0h-4zM579.9 313.0h4V324.0h-4zM589.1 310.3h4V335.0h-4zM593.7 332.2h4V337.7h-4zM598.3 336.3h4V362.4h-4zM602.9 355.5h4V387.1h-4zM607.5 388.4h4V457.0h-4zM621.3 421.3h4V439.1h-4zM630.5 425.4h4V441.9h-4zM639.7 429.6h4V439.1h-4zM644.3 435.0h4V444.6h-4zM648.9 447.4h4V452.9h-4zM653.5 455.6h4V481.6h-4zM662.7 469.3h4V478.9h-4zM667.3 476.2h4V480.3h-4zM671.9 477.5h4V484.4h-4zM681.1 447.4h4V457.0h-4zM690.4 446.0h4V457.0h-4zM708.8 429.3h4V440.3h-4zM713.4 437.6h4V448.5h-4zM727.2 418.4h4V429.3h-4zM731.8 428.0h4V437.6h-4zM745.6 407.4h4V421.1h-4zM759.4 396.4h4V434.8h-4zM764.0 436.2h4V459.5h-4zM773.2 445.8h4V459.5h-4zM782.4 448.5h4V459.5h-4zM787.0 448.5h4V462.2h-4zM791.6 452.6h4V463.6h-4zM800.8 445.8h4V451.3h-4zM805.4 447.2h4V456.8h-4zM810.0 456.8h4V497.9h-4zM819.2 488.3h4V547.2h-4zM823.9 547.1h4V660.1h-4zM828.5 660.1h4V686.1h-4zM842.3 580.6h4V612.1h-4zM846.9 584.7h4V603.9h-4zM856.1 603.9h4V614.8h-4zM860.7 613.5h4V672.4h-4zM869.9 664.2h4V683.4h-4zM874.5 669.6h4V714.9h-4zM879.1 680.6h4V725.8h-4zM892.9 673.8h4V686.1h-4zM915.9 588.8h4V609.3h-4zM920.5 606.6h4V631.3h-4zM925.1 624.4h4V651.8h-4zM929.7 638.1h4V658.7h-4zM938.9 639.5h4V669.6h-4zM948.1 647.7h4V653.2h-4zM957.3 613.5h4V649.1h-4zM966.6 646.3h4V664.2h-4zM971.2 662.8h4V688.8h-4zM975.8 686.1h4V712.1h-4zM980.4 706.7h4V719.0h-4zM989.6 708.0h4V735.4h-4zM998.8 709.4h4V721.7h-4zM1003.4 717.6h4V721.7h-4zM1008.0 708.0h4V724.5h-4zM1017.2 705.3h4V723.1h-4zM1031.0 691.6h4V709.4h-4zM1040.2 687.5h4V697.1h-4zM1049.4 690.5h4V708.3h-4zM1063.2 680.9h4V691.8h-4zM1067.8 686.3h4V715.1h-4zM1072.4 715.1h4V726.1h-4zM1081.6 728.8h4V779.6h-4zM1086.2 764.5h4V794.6h-4zM1090.8 783.7h4V804.2h-4zM1095.4 789.1h4V798.7h-4zM1109.3 780.9h4V791.9h-4zM1113.9 786.4h4V807.0h-4zM1136.9 749.4h4V804.2h-4zM1155.3 663.0h4V678.1h-4zM1164.5 658.9h4V682.2h-4zM1169.1 678.1h4V712.4h-4zM1173.7 701.4h4V717.9h-4zM1182.9 693.2h4V720.6h-4zM1187.5 709.6h4V726.1h-4zM1196.7 723.4h4V728.8h-4zM1201.3 726.1h4V731.6h-4zM1205.9 728.8h4V731.6h-4zM1224.3 678.1h4V683.6h-4zM1228.9 690.5h4V720.6h-4zM1238.1 704.2h4V713.8h-4zM1242.8 704.2h4V709.6h-4zM1247.4 705.5h4V712.4h-4zM1252.0 711.0h4V720.6h-4zM1261.2 713.8h4V734.3h-4zM1265.8 730.5h4V747.8h-4zM1270.4 747.8h4V762.6h-4zM1275.0 755.2h4V772.5h-4zM1302.6 713.1h4V728.0h-4zM1321.0 651.3h4V661.2h-4zM1339.4 619.1h4V635.2h-4zM1353.2 562.3h4V588.2h-4zM1367.0 526.4h4V537.4h-4zM1394.7 423.6h4V455.1h-4zM1408.5 441.4h4V466.1h-4zM1413.1 463.4h4V471.6h-4zM1440.7 385.2h4V397.6h-4zM1445.3 389.3h4V398.9h-4zM1459.1 348.2h4V361.9h-4zM1463.7 360.6h4V377.0h-4zM1472.9 370.2h4V390.7h-4zM1477.5 392.1h4V420.9h-4zM1482.1 411.3h4V425.0h-4zM1500.5 394.8h4V408.5h-4zM1519.0 371.5h4V392.1h-4zM1523.6 396.2h4V422.2h-4zM1528.2 401.7h4V422.2h-4zM1532.8 425.0h4V437.3h-4zM1537.4 435.9h4V468.8h-4zM1551.2 415.4h4V435.9h-4zM1560.4 425.0h4V449.6h-4zM1569.6 437.3h4V444.2h-4zM1583.4 377.7h4V434.2h-4zM1601.8 364.9h4V387.6h-4zM1624.8 304.2h4V324.0h-4zM1629.4 324.0h4V339.5h-4zM1638.6 329.6h4V335.3h-4zM1647.8 333.9h4V357.9h-4zM1684.7 223.0h4V224.5h-4zM1693.9 204.4h4V227.0h-4zM1698.5 226.0h4V231.4h-4z" fill="#ef5350"/>
<path d="M24.9,278.4C28.1,278.4 38.4,278.1 44.4,278.4C50.4,278.7 54.6,281.8 60.7,280.4C66.8,279.0 74.2,273.9 81.0,270.2C87.8,266.5 94.6,262.1 101.4,258.0C108.2,253.9 114.9,250.6 121.7,245.8C128.5,241.1 136.0,234.1 142.1,229.5C148.2,224.9 153.0,220.1 158.4,218.1C163.8,216.1 169.2,216.1 174.6,217.3C180.0,218.5 184.8,220.8 190.9,225.5C197.0,230.2 204.5,238.4 211.3,245.8C218.1,253.2 224.2,263.4 231.6,270.2C239.0,277.0 247.9,282.1 256.0,286.5C264.1,290.9 272.3,294.3 280.4,296.7C288.5,299.1 298.0,299.7 304.8,300.7C311.6,301.7 315.0,298.4 321.1,302.8C327.2,307.2 334.0,317.7 341.5,327.2C349.0,336.7 358.4,348.8 365.9,359.7C373.3,370.6 380.1,380.1 386.2,392.3C392.3,404.5 396.9,422.8 402.5,433.0C408.1,443.2 413.6,450.1 420.0,453.3C426.4,456.5 433.2,451.7 440.7,452.0C448.2,452.3 458.3,454.7 465.1,455.2C471.9,455.7 475.3,456.8 481.4,455.2C487.5,453.6 494.9,445.3 501.7,445.8C508.5,446.3 514.6,458.3 522.1,458.0C529.6,457.7 539.7,449.6 546.5,443.8C553.3,438.1 557.4,433.0 562.8,423.5C568.2,414.0 572.2,397.7 579.0,386.8C585.8,375.9 596.7,363.5 603.5,358.4C610.3,353.3 612.9,353.9 619.7,356.3C626.5,358.7 636.7,364.1 644.2,372.6C651.7,381.1 657.7,395.7 664.5,407.2C671.3,418.7 678.7,434.4 684.8,441.8C690.9,449.2 694.3,450.2 701.1,451.9C707.9,453.6 717.4,453.2 725.5,451.9C733.6,450.5 743.9,446.9 750.0,443.8C756.1,440.8 753.9,435.0 762.2,433.6C770.5,432.2 793.0,435.3 800.0,435.7C807.0,436.1 800.9,432.9 804.4,436.0C807.9,439.1 814.6,445.2 820.7,454.3C826.8,463.4 833.5,476.7 841.0,490.9C848.5,505.1 858.7,524.1 865.5,539.7C872.3,555.3 875.6,568.9 881.7,584.5C887.8,600.1 896.7,623.5 902.1,633.3C907.5,643.1 910.2,642.8 914.3,643.5C918.4,644.2 920.4,636.0 926.5,637.4C932.6,638.8 942.8,650.2 950.9,651.6C959.0,653.0 968.5,645.5 975.3,645.5C982.1,645.5 985.5,646.9 991.6,651.6C997.7,656.4 1005.1,667.5 1011.9,674.0C1018.7,680.5 1024.1,684.9 1032.3,690.3C1040.5,695.7 1052.7,703.2 1060.8,706.6C1068.9,710.0 1074.3,707.9 1081.1,710.6C1087.9,713.3 1095.4,718.0 1101.5,722.8C1107.6,727.5 1111.6,733.7 1117.7,739.1C1123.8,744.5 1132.0,752.7 1138.1,755.4C1144.2,758.1 1149.0,756.8 1154.4,755.4C1159.8,754.0 1166.3,750.0 1170.6,747.3C1174.9,744.6 1178.1,740.6 1180.0,739.1C1181.9,737.6 1178.1,741.9 1182.1,738.0C1186.1,734.1 1196.1,721.8 1204.2,715.9C1212.3,710.0 1221.9,703.4 1230.7,702.7C1239.5,702.0 1248.4,708.2 1257.2,711.5C1266.0,714.8 1275.0,720.7 1283.8,722.5C1292.6,724.3 1301.5,724.7 1310.3,722.5C1319.1,720.3 1329.4,715.5 1336.8,709.3C1344.2,703.0 1349.7,694.2 1354.5,685.0C1359.3,675.8 1362.5,663.6 1365.5,654.0C1368.5,644.4 1368.2,639.3 1372.2,627.5C1376.2,615.7 1385.0,595.8 1389.8,583.3C1394.6,570.8 1397.2,561.2 1400.9,552.4C1404.6,543.6 1407.9,537.7 1411.9,530.3C1416.0,522.9 1420.5,517.8 1425.2,508.2C1429.9,498.6 1435.3,483.8 1440.0,472.8C1444.7,461.9 1447.8,452.0 1453.4,442.5C1459.0,433.0 1466.9,421.8 1473.6,415.6C1480.3,409.4 1485.9,409.7 1493.8,405.5C1501.7,401.3 1512.9,391.5 1520.7,390.4C1528.5,389.3 1533.0,394.6 1540.8,398.8C1548.6,403.0 1559.3,412.8 1567.7,415.6C1576.1,418.4 1584.6,416.2 1591.3,415.6C1598.0,415.1 1601.4,417.3 1608.1,412.3C1614.8,407.3 1623.2,394.4 1631.6,385.4C1640.0,376.4 1651.2,366.9 1658.5,358.5C1665.8,350.1 1670.3,344.0 1675.3,335.0C1680.3,326.0 1684.8,312.0 1688.7,304.7C1692.6,297.4 1695.2,296.6 1698.8,291.3C1702.4,286.0 1708.6,275.9 1710.6,272.8" fill="none" stroke="#ff6d00" stroke-width="2.4" stroke-linejoin="round"/>
<path d="M24.9,235.6C26.1,234.9 29.0,232.1 32.2,231.6C35.5,231.1 39.6,232.6 44.4,232.8C49.1,233.0 56.0,234.0 60.7,232.8C65.5,231.6 68.8,227.4 72.9,225.5C77.0,223.6 80.3,223.5 85.1,221.4C89.8,219.3 96.7,215.6 101.4,213.2C106.2,210.8 110.2,212.5 113.6,207.1C117.0,201.7 119.0,188.5 121.7,180.7C124.4,172.9 126.5,164.0 129.9,160.3C133.3,156.6 138.0,158.0 142.1,158.3C146.2,158.7 149.6,161.2 154.3,162.4C159.1,163.6 166.5,165.2 170.6,165.2C174.7,165.2 175.3,163.9 178.7,162.4C182.1,160.9 186.8,157.5 190.9,156.3C195.0,155.2 199.0,153.5 203.1,155.5C207.2,157.5 210.6,160.2 215.3,168.5C220.1,176.8 224.8,192.9 231.6,205.1C238.4,217.3 250.6,230.8 256.0,241.7C261.4,252.5 259.4,264.1 264.2,270.2C268.9,276.3 276.4,276.7 284.5,278.4C292.6,280.1 306.2,283.1 313.0,280.4C319.8,277.7 320.4,266.5 325.2,262.1C329.9,257.7 336.8,254.9 341.5,253.9C346.2,252.9 348.3,252.3 353.7,256.0C359.1,259.7 366.6,267.2 374.0,276.3C381.4,285.4 393.4,302.0 398.4,310.9C403.4,319.8 401.8,322.7 404.1,329.9C406.4,337.1 409.5,348.4 412.2,354.3C414.9,360.2 415.6,363.3 420.3,365.3C425.1,367.3 433.9,365.3 440.7,366.5C447.5,367.7 454.2,370.9 461.0,372.6C467.8,374.3 476.0,374.3 481.4,376.7C486.8,379.1 489.5,384.1 493.6,386.8C497.7,389.5 501.7,389.5 505.8,392.9C509.9,396.3 513.9,407.5 518.0,407.2C522.1,406.9 525.1,398.4 530.2,390.9C535.3,383.4 543.1,375.3 548.5,362.4C553.9,349.5 558.4,329.2 562.8,313.6C567.2,298.0 571.3,278.3 575.0,268.8C578.7,259.3 581.8,258.6 585.2,256.6C588.6,254.6 591.6,254.2 595.3,256.6C599.0,259.0 603.4,268.2 607.5,270.9C611.6,273.6 614.3,273.6 619.7,272.9C625.1,272.2 634.0,266.1 640.1,266.8C646.2,267.5 651.6,269.9 656.4,277.0C661.1,284.1 664.5,297.3 668.6,309.5C672.7,321.7 676.4,332.6 680.8,350.2C685.2,367.8 688.9,404.1 695.0,415.3C701.1,426.5 710.9,418.1 717.4,417.4C723.9,416.7 727.6,415.0 733.7,411.3C739.8,407.6 747.2,397.1 754.0,395.0C760.8,392.9 766.7,398.5 774.4,399.0C782.1,399.5 794.6,397.9 800.0,397.8C805.4,397.7 803.4,399.6 806.5,398.5C809.6,397.4 815.7,396.8 818.7,391.2C821.8,385.6 822.8,372.1 824.8,364.8C826.8,357.6 828.2,349.4 830.9,347.7C833.6,346.0 837.3,349.4 841.0,354.6C844.7,359.8 848.8,372.6 853.2,379.0C857.6,385.4 862.8,385.4 867.5,393.2C872.2,401.0 876.6,408.2 881.7,425.8C886.8,443.4 893.6,477.3 898.0,499.0C902.4,520.7 904.8,545.8 908.2,556.0C911.6,566.2 914.9,558.4 918.3,560.1C921.7,561.8 923.1,561.5 928.5,566.2C933.9,571.0 943.8,584.9 950.9,588.6C958.0,592.3 964.5,590.0 971.3,588.6C978.1,587.2 986.2,579.7 991.6,580.4C997.0,581.1 998.4,585.8 1003.8,592.6C1009.2,599.4 1017.4,613.0 1024.2,621.1C1031.0,629.2 1038.4,631.7 1044.5,641.5C1050.6,651.3 1055.4,673.7 1060.8,680.1C1066.2,686.5 1070.3,684.2 1077.1,680.1C1083.9,676.0 1094.0,659.4 1101.5,655.7C1109.0,652.0 1115.7,653.6 1121.8,657.7C1127.9,661.8 1132.0,678.7 1138.1,680.1C1144.2,681.5 1151.8,671.4 1158.4,665.9C1165.0,660.4 1170.8,650.5 1177.7,647.4C1184.6,644.3 1191.7,646.9 1199.8,647.4C1207.9,647.9 1220.8,648.3 1226.3,650.5C1231.8,652.7 1230.0,658.6 1232.9,660.7C1235.9,662.8 1240.0,659.2 1244.0,662.9C1248.0,666.6 1251.3,680.2 1257.2,682.8C1263.1,685.4 1271.2,679.3 1279.3,678.3C1287.4,677.3 1300.4,676.2 1305.9,677.0C1311.4,677.8 1309.6,685.1 1312.5,682.8C1315.4,680.4 1319.5,672.1 1323.5,662.9C1327.5,653.7 1332.4,639.3 1336.8,627.5C1341.2,615.7 1344.9,606.2 1350.1,592.2C1355.2,578.2 1362.5,560.5 1367.7,543.5C1372.9,526.5 1377.0,506.7 1381.0,490.5C1385.0,474.3 1388.3,460.3 1392.0,446.3C1395.7,432.3 1399.0,415.0 1403.1,406.5C1407.2,398.0 1411.2,399.2 1416.4,395.5C1421.6,391.8 1429.6,387.0 1434.0,384.4C1438.4,381.8 1440.2,382.4 1442.9,380.0C1445.6,377.6 1447.8,375.9 1450.1,370.3C1452.4,364.8 1453.4,351.5 1456.8,346.7C1460.2,341.9 1463.6,342.5 1470.3,341.7C1477.0,340.9 1488.1,340.0 1497.1,341.7C1506.0,343.4 1517.0,351.4 1524.0,351.8C1531.0,352.2 1534.7,343.4 1539.2,344.0C1543.7,344.6 1546.2,350.5 1550.9,355.1C1555.7,359.8 1562.7,370.3 1567.7,371.9C1572.8,373.5 1576.2,365.1 1581.2,364.5C1586.2,363.9 1593.5,369.6 1598.0,368.6C1602.5,367.6 1605.3,365.2 1608.1,358.5C1610.9,351.8 1611.4,338.3 1614.8,328.2C1618.2,318.1 1623.7,305.3 1628.2,298.0C1632.7,290.7 1637.2,286.5 1641.7,284.5C1646.2,282.5 1651.8,287.3 1655.1,286.2C1658.4,285.1 1659.0,284.2 1661.8,277.8C1664.6,271.4 1668.5,257.1 1671.9,247.6C1675.3,238.1 1678.6,228.5 1682.0,220.7C1685.4,212.8 1688.7,206.7 1692.1,200.5C1695.5,194.3 1699.1,188.7 1702.2,183.7C1705.3,178.7 1709.2,172.5 1710.6,170.3" fill="none" stroke="#2962ff" stroke-width="2.6" stroke-linejoin="round"/>
<path d="M24.9,325.1C28.1,325.6 37.1,327.5 44.4,328.0C51.7,328.5 62.7,328.1 68.8,328.0C74.9,327.9 77.3,329.0 81.0,327.2C84.7,325.4 88.2,320.7 91.2,317.0C94.2,313.3 96.2,306.8 99.3,304.8C102.3,302.8 106.8,303.1 109.5,304.8C112.2,306.5 113.0,311.6 115.6,315.0C118.2,318.4 120.6,326.5 125.0,325.1C129.4,323.7 137.9,313.2 142.1,306.8C146.3,300.4 147.1,291.6 150.2,286.5C153.2,281.4 157.0,278.7 160.4,276.3C163.8,273.9 167.9,272.2 170.6,272.2C173.3,272.2 174.0,273.2 176.7,276.3C179.4,279.4 182.4,283.5 186.8,290.6C191.2,297.7 197.0,309.9 203.1,319.0C209.2,328.1 217.4,342.1 223.5,345.5C229.6,348.9 233.6,341.4 239.7,339.4C245.8,337.4 255.4,336.8 260.1,333.3C264.9,329.8 260.8,320.6 268.2,318.2C275.6,315.8 296.6,316.8 304.8,319.0C313.0,321.2 313.0,323.2 317.1,331.3C321.2,339.4 324.6,354.3 329.3,367.9C334.0,381.4 340.1,399.0 345.5,412.6C350.9,426.2 356.4,438.5 361.8,449.3C367.2,460.1 372.7,465.5 378.1,477.7C383.5,489.9 389.6,510.6 394.4,522.5C399.1,534.4 402.3,544.2 406.6,549.0C410.9,553.8 417.0,551.2 420.0,551.0C423.0,550.8 419.6,548.2 424.4,547.6C429.2,547.0 440.0,547.3 448.8,547.6C457.6,547.9 470.5,551.3 477.3,549.6C484.1,547.9 485.1,545.5 489.5,537.4C493.9,529.3 499.4,504.5 503.8,500.8C508.2,497.1 512.3,513.0 516.0,515.0C519.7,517.0 522.4,509.3 526.1,513.0C529.8,516.7 534.0,532.0 538.4,537.4C542.8,542.8 548.5,542.1 552.6,545.5C556.7,548.9 559.4,554.4 562.8,557.7C566.2,561.0 570.2,565.8 572.9,565.1C575.6,564.4 575.3,563.8 579.0,553.7C582.7,543.7 589.2,521.8 595.3,504.8C601.4,487.8 608.9,455.3 615.7,451.9C622.5,448.5 629.2,471.3 636.0,484.5C642.8,497.7 650.3,522.1 656.4,531.3C662.5,540.4 667.9,542.4 672.6,539.4C677.3,536.4 681.1,521.1 684.8,513.0C688.5,504.9 689.6,494.8 695.0,490.6C700.4,486.4 709.6,487.5 717.4,487.8C725.2,488.1 734.3,495.9 741.8,492.6C749.3,489.3 754.1,471.6 762.2,468.2C770.3,464.8 784.3,470.9 790.6,472.3C796.9,473.7 797.0,475.3 800.0,476.4C803.0,477.5 805.7,474.9 808.5,478.7C811.3,482.5 813.8,478.8 816.6,499.0C819.4,519.2 822.4,576.1 825.1,600.0C827.8,623.9 829.9,630.9 833.0,642.4C836.1,653.9 839.7,659.7 843.7,669.0C847.7,678.3 852.9,686.6 856.9,698.1C860.9,709.6 864.4,726.8 867.5,737.9C870.6,749.0 872.6,754.1 875.5,764.5C878.4,774.9 881.7,795.9 884.8,800.3C887.9,804.7 891.2,797.0 894.1,791.0C897.0,785.0 899.4,773.4 902.0,764.5C904.6,755.6 906.5,744.3 910.0,737.9C913.5,731.5 918.3,728.2 923.2,726.0C928.1,723.8 933.0,725.8 939.2,724.7C945.4,723.6 955.1,722.3 960.4,719.4C965.7,716.5 967.5,708.3 971.0,707.4C974.5,706.5 978.5,709.0 981.6,714.1C984.7,719.2 986.4,732.2 989.5,737.9C992.6,743.6 995.8,745.0 1000.2,748.5C1004.6,752.0 1010.8,756.5 1016.1,759.2C1021.4,761.9 1027.6,764.5 1032.0,764.5C1036.4,764.5 1038.6,763.6 1042.6,759.2C1046.6,754.8 1052.4,741.8 1055.9,737.9C1059.4,734.0 1060.3,735.8 1063.8,735.8C1067.3,735.8 1073.6,734.0 1077.1,737.9C1080.6,741.8 1081.5,750.4 1085.0,759.2C1088.5,768.1 1095.8,784.3 1098.3,791.0C1100.8,797.7 1098.8,796.0 1100.0,799.2C1101.2,802.5 1103.4,805.8 1105.7,810.5C1108.0,815.2 1110.8,823.0 1114.1,827.5C1117.4,832.0 1122.0,835.8 1125.5,837.4C1129.0,839.0 1133.3,836.8 1135.4,837.4C1137.5,838.0 1136.3,840.5 1138.2,840.9C1140.1,841.2 1143.6,838.9 1146.7,839.5C1149.8,840.1 1153.5,841.8 1156.6,844.5C1159.7,847.2 1162.5,854.0 1165.1,855.8C1167.7,857.6 1169.3,857.0 1172.1,855.1C1174.9,853.2 1178.9,848.9 1182.0,844.5C1185.1,840.1 1187.7,833.1 1190.5,828.9C1193.3,824.6 1196.2,823.7 1199.0,819.0C1201.8,814.3 1203.7,807.2 1207.5,800.6C1211.3,794.0 1218.3,785.8 1221.6,779.4C1224.9,773.0 1225.6,767.2 1227.3,762.4C1229.0,757.6 1229.6,752.8 1231.5,750.4C1233.4,748.0 1235.5,748.9 1238.6,748.3C1241.7,747.7 1247.1,748.0 1249.9,746.9C1252.7,745.8 1253.5,742.2 1255.6,741.9C1257.7,741.5 1260.3,743.0 1262.7,744.8C1265.1,746.6 1267.6,750.0 1269.7,752.5C1271.8,755.0 1273.3,756.9 1275.4,759.6C1277.5,762.3 1280.2,767.0 1282.5,768.8C1284.8,770.6 1286.6,770.1 1289.5,770.2C1292.4,770.3 1296.2,769.7 1300.0,769.5C1303.8,769.3 1307.8,766.1 1312.5,769.0C1317.2,771.9 1321.7,779.6 1328.0,786.6C1334.3,793.6 1343.8,807.2 1350.1,810.9C1356.3,814.6 1358.9,815.3 1365.5,808.7C1372.1,802.1 1383.5,783.7 1389.8,771.2C1396.1,758.7 1398.7,750.9 1403.1,733.6C1407.5,716.3 1412.0,687.9 1416.4,667.3C1420.8,646.7 1424.4,629.7 1429.6,609.8C1434.8,589.9 1441.6,563.0 1447.3,548.0C1453.0,533.0 1458.0,529.0 1463.5,519.8C1469.0,510.6 1475.2,499.6 1480.3,492.9C1485.3,486.2 1489.3,484.5 1493.8,479.5C1498.3,474.5 1502.7,470.6 1507.2,462.7C1511.7,454.8 1517.1,437.2 1520.7,432.4C1524.3,427.6 1525.8,430.2 1529.1,434.1C1532.4,438.0 1537.2,451.8 1540.8,456.0C1544.4,460.2 1545.3,457.4 1550.9,459.3C1556.5,461.2 1566.7,466.0 1574.5,467.7C1582.3,469.4 1592.4,468.5 1598.0,469.4C1603.6,470.2 1604.7,469.4 1608.1,472.8C1611.5,476.2 1615.4,485.2 1618.2,489.6C1621.0,494.0 1622.7,500.1 1624.9,499.0C1627.1,497.9 1628.2,487.8 1631.6,482.9C1634.9,478.0 1641.1,475.6 1645.0,469.4C1648.9,463.2 1652.0,452.9 1655.1,445.9C1658.2,438.9 1660.7,429.6 1663.5,427.4C1666.3,425.1 1669.4,433.0 1671.9,432.4C1674.4,431.8 1675.6,426.8 1678.7,424.0C1681.8,421.2 1686.2,420.9 1690.4,415.6C1694.6,410.3 1700.5,395.7 1703.9,392.1C1707.3,388.5 1709.5,393.5 1710.6,393.8" fill="none" stroke="#2962ff" stroke-width="2.6" stroke-linejoin="round"/>
</g>
<g clip-path="url(#cr)">
<rect x="26" y="1005" width="2794" height="98" fill="#7e57c2" fill-opacity="0.1"/>
<line x1="26" y1="1005" x2="2820" y2="1005" stroke="#787b86" stroke-width="2" stroke-dasharray="10 12"/>
<line x1="26" y1="1054" x2="2820" y2="1054" stroke="#787b86" stroke-width="2" stroke-dasharray="10 12"/>
<line x1="26" y1="1103" x2="2820" y2="1103" stroke="#787b86" stroke-width="2" stroke-dasharray="10 12"/>
<line x1="26" y1="982" x2="2820" y2="982" stroke="#3d7bf5" stroke-width="2" stroke-dasharray="2 4"/>
<polyline points="25.1,1033.4 31.6,1043.9 37.5,1060.2 42.1,1063.7 48.0,1060.6 52.6,1062.5 54.9,1071.3 64.3,1046.2 70.1,1042.7 74.7,1028.7 80.6,1042.7 87.5,1045.0 94.5,1036.9 102.7,1019.4 107.3,1027.5 113.2,1032.2 115.0,1006.6 120.2,1011.2 124.8,1004.3 129.5,1031.0 134.1,1025.2 140.0,1032.2 142.3,1048.5 146.9,1050.8 157.4,1064.1 162.1,1064.1 166.7,1060.2 170.2,1052.0 174.9,1071.8 179.6,1086.9 185.4,1086.2 190.0,1073.0 197.0,1078.8 202.8,1085.1 212.2,1087.6 218.0,1096.3 223.8,1092.8 229.6,1068.3 239.0,1073.0 244.8,1065.3 250.6,1073.7 257.6,1062.5 263.4,1070.6 268.1,1074.1 276.2,1074.6 282.0,1081.1 287.9,1084.6 290.2,1071.3 299.5,1069.9 308.8,1086.9 314.6,1090.4 322.8,1125.8 327.4,1109.1 332.1,1118.9 341.4,1120.2 350.3,1132.4 355.4,1102.1 360.1,1094.6 364.7,1104.4 370.5,1096.3 374.0,1099.8 377.5,1097.9 381.0,1104.4 388.0,1113.7 392.7,1123.5 397.3,1123.5 404.8,1128.9 410.1,1106.7 414.8,1070.6 420.6,1050.8 425.3,1043.9 429.9,1040.4 432.3,1052.0 436.9,1051.3 441.6,1055.5 447.4,1069.0 457.9,1053.2 461.4,1069.5 464.9,1066.7 470.7,1074.1 476.5,1066.7 484.7,1067.1 489.3,1080.0 492.8,1076.5 497.5,1077.6 502.1,1073.0 506.8,1088.1 512.6,1082.3 517.3,1055.5 519.6,1055.0 524.3,1041.5 528.9,1013.1 534.8,1010.8 539.4,1024.8 544.1,1026.4 549.9,1040.4 552.2,1011.2 556.9,1014.7 563.9,1008.9 572.0,1001.2 579.0,1022.4 584.8,1020.1 589.5,1032.2 594.2,1033.6 604.6,1061.3 607.0,1085.8 612.8,1074.1 617.5,1069.5 622.8,1077.6 628.0,1071.3 632.6,1074.6 637.7,1069.9 641.9,1074.1 650.1,1079.3 655.4,1091.6 660.6,1083.9 666.4,1084.6 672.7,1087.6 677.3,1062.0 682.7,1067.6 687.3,1062.0 692.7,1067.1 695.5,1059.7 704.8,1049.7 714.6,1062.5 720.0,1049.2 725.1,1042.7 728.6,1049.7 732.3,1055.0 742.1,1036.9 747.2,1046.2 754.9,1032.2 759.6,1059.0 764.9,1071.8 770.0,1063.0 775.2,1069.0 781.7,1064.1 787.5,1069.9 792.2,1073.0 797.5,1059.0 802.6,1059.7 807.8,1066.0 812.0,1088.1 814.3,1080.7 818.9,1099.8 824.8,1124.9 830.1,1127.7 835.2,1097.4 839.9,1083.4 847.4,1088.6 852.7,1085.8 857.4,1090.4 862.7,1101.6 867.9,1098.6 874.8,1102.6 880.0,1110.9 885.3,1104.4 890.0,1088.6 894.6,1090.0 900.0,1071.8 902.8,1069.0 907.0,1054.3 912.1,1051.5 922.6,1066.0 928.4,1071.8 930.3,1076.9 935.0,1067.1 940.1,1078.3 944.7,1066.0 949.8,1066.0 954.5,1055.0 959.9,1069.0 962.9,1065.3 977.3,1085.8 983.2,1088.6 987.8,1086.9 990.1,1091.6 994.8,1076.0 1000.6,1080.0 1009.9,1083.0 1015.1,1072.3 1017.4,1080.0 1022.8,1072.3 1032.8,1071.3 1037.9,1057.8 1042.6,1061.3 1047.7,1058.3 1050.0,1068.3 1055.4,1063.0 1060.0,1052.7 1064.7,1054.3 1069.3,1069.9 1076.3,1078.8 1082.1,1094.6 1088.0,1100.9 1097.3,1104.9 1102.6,1100.9 1105.0,1090.9 1109.6,1093.9 1114.8,1100.9 1120.6,1077.6 1125.2,1077.6 1134.6,1062.5 1137.6,1087.6 1141.6,1046.2 1146.9,1031.0 1152.5,1021.0 1157.8,1026.4 1162.5,1020.6 1170.2,1048.5 1175.3,1052.0 1180.0,1041.1 1184.6,1053.6 1189.3,1055.5 1192.8,1053.6 1200.0,1058.3 1208.0,1058.8 1212.6,1054.6 1217.3,1035.5 1222.4,1029.0 1230.1,1056.5 1234.7,1046.0 1240.1,1047.6 1245.2,1051.3 1249.9,1052.3 1252.2,1057.6 1256.9,1056.0 1267.3,1073.9 1273.2,1079.8 1277.4,1086.3 1279.7,1073.2 1284.8,1070.4 1290.6,1057.6 1300.0,1047.6 1305.1,1052.3 1312.8,1028.5 1317.4,1008.0 1322.1,1015.7 1327.2,1001.7 1337.9,1000.1 1340.2,1015.7 1344.2,1002.4 1350.0,991.7 1355.2,997.8 1360.5,991.7 1365.2,977.7 1367.5,984.3 1377.5,973.8 1382.6,971.4 1392.4,960.5 1397.1,990.1 1404.8,986.1 1410.6,1006.4 1415.2,1011.0 1419.9,1009.4 1425.7,1001.0 1430.4,996.4 1437.4,983.1 1442.7,993.6 1447.4,994.7 1454.8,980.1 1464.6,1007.1 1470.0,1003.4 1479.3,1039.7 1485.1,1044.8 1487.9,1044.3 1492.1,1029.0 1497.2,1028.5 1502.6,1039.0 1508.0,1039.0 1514.9,1020.4 1520.1,1035.0 1524.7,1043.7 1529.4,1059.3 1534.5,1063.9 1539.9,1079.3 1542.2,1056.9 1547.6,1049.0 1552.2,1060.0 1556.9,1054.6 1562.0,1065.8 1567.1,1060.0 1573.2,1061.6 1574.8,1039.0 1580.2,1031.3 1584.8,1058.3 1590.0,1044.3 1595.8,1035.0 1600.4,1030.4 1602.8,1041.3 1608.6,1033.6 1617.4,1012.7 1622.1,1012.2 1629.5,1033.6 1635.4,1028.5 1640.0,1032.7 1644.7,1032.0 1650.0,1047.1 1655.2,1042.0 1659.3,1029.0 1662.1,1014.5 1666.8,1010.3 1672.6,997.8 1683.1,994.7 1687.3,995.9 1690.1,989.4 1694.8,1008.0 1699.9,1012.7 1710.6,995.9" fill="none" stroke="#7e57c2" stroke-width="2.6" stroke-linejoin="round"/>
<line x1="1424.1" y1="973.3" x2="1732" y2="990.3" stroke="#fff" stroke-width="4.2"/>
</g>
<text x="25" y="48" font-size="29" fill="#d1d4dc" stroke="#d1d4dc" stroke-width="0.5" textLength="1018" lengthAdjust="spacingAndGlyphs">AMBCrypto_TA published on TradingView.com, Jan 05, 2022 12:48 UTC+5:30</text>
<text x="46" y="114.5" font-size="29" fill="#b2b5be" stroke="#b2b5be" stroke-width="0.5" textLength="440.8" lengthAdjust="spacingAndGlyphs">Fantom / TetherUS, 4h, BINANCE</text>
<text x="505.5" y="114.5" font-size="29" fill="#b2b5be" stroke="#b2b5be" stroke-width="0.5" textLength="19.5" lengthAdjust="spacingAndGlyphs">O</text>
<text x="526.4" y="114.5" font-size="29" fill="#26a69a" stroke="#26a69a" stroke-width="0.5" textLength="88.5" lengthAdjust="spacingAndGlyphs">2.9474</text>
<text x="633.5" y="114.5" font-size="29" fill="#b2b5be" stroke="#b2b5be" stroke-width="0.5" textLength="18.5" lengthAdjust="spacingAndGlyphs">H</text>
<text x="653.7" y="114.5" font-size="29" fill="#26a69a" stroke="#26a69a" stroke-width="0.5" textLength="87.9" lengthAdjust="spacingAndGlyphs">3.0576</text>
<text x="762.4" y="114.5" font-size="29" fill="#b2b5be" stroke="#b2b5be" stroke-width="0.5" textLength="13.6" lengthAdjust="spacingAndGlyphs">L</text>
<text x="776.4" y="114.5" font-size="29" fill="#26a69a" stroke="#26a69a" stroke-width="0.5" textLength="86.3" lengthAdjust="spacingAndGlyphs">2.9341</text>
<text x="884.5" y="114.5" font-size="29" fill="#b2b5be" stroke="#b2b5be" stroke-width="0.5" textLength="17.5" lengthAdjust="spacingAndGlyphs">C</text>
<text x="903.1" y="114.5" font-size="29" fill="#26a69a" stroke="#26a69a" stroke-width="0.5" textLength="86.9" lengthAdjust="spacingAndGlyphs">3.0505</text>
<text x="1010.9" y="114.5" font-size="29" fill="#26a69a" stroke="#26a69a" stroke-width="0.5" textLength="225.1" lengthAdjust="spacingAndGlyphs">+0.1031 (+3.50%)</text>
<text x="46" y="156.5" font-size="29" fill="#b2b5be" stroke="#b2b5be" stroke-width="0.5" textLength="254.5" lengthAdjust="spacingAndGlyphs">BB (20, close, 2, 0)</text>
<text x="319.6" y="156.5" font-size="29" fill="#ff6d00" stroke="#ff6d00" stroke-width="0.5" textLength="85.7" lengthAdjust="spacingAndGlyphs">2.7031</text>
<text x="428.6" y="156.5" font-size="29" fill="#2962ff" stroke="#2962ff" stroke-width="0.5" textLength="86.2" lengthAdjust="spacingAndGlyphs">3.1313</text>
<text x="535.8" y="156.5" font-size="29" fill="#2962ff" stroke="#2962ff" stroke-width="0.5" textLength="87.8" lengthAdjust="spacingAndGlyphs">2.2749</text>
<text x="45.6" y="987.5" font-size="29" fill="#b2b5be" stroke="#b2b5be" stroke-width="0.5" textLength="189.4" lengthAdjust="spacingAndGlyphs">RSI (14, close)</text>
<text x="255.4" y="987.5" font-size="29" fill="#7e57c2" stroke="#7e57c2" stroke-width="0.5" textLength="72.0" lengthAdjust="spacingAndGlyphs">73.19</text>
<text x="2846.5" y="427.5" font-size="29.5" fill="#b2b5be" stroke="#b2b5be" stroke-width="0.5" textLength="88" lengthAdjust="spacingAndGlyphs">2.2000</text>
<text x="2846.5" y="606.5" font-size="29.5" fill="#b2b5be" stroke="#b2b5be" stroke-width="0.5" textLength="88" lengthAdjust="spacingAndGlyphs">1.7000</text>
<text x="2846.5" y="693.5" font-size="29.5" fill="#b2b5be" stroke="#b2b5be" stroke-width="0.5" textLength="88" lengthAdjust="spacingAndGlyphs">1.5000</text>
<text x="2846.5" y="792.5" font-size="29.5" fill="#b2b5be" stroke="#b2b5be" stroke-width="0.5" textLength="88" lengthAdjust="spacingAndGlyphs">1.3000</text>
<text x="2846.5" y="877.5" font-size="29.5" fill="#b2b5be" stroke="#b2b5be" stroke-width="0.5" textLength="88" lengthAdjust="spacingAndGlyphs">1.1500</text>
<text x="2846.5" y="211.0" font-size="29.5" fill="#b2b5be" stroke="#b2b5be" stroke-width="0.5" textLength="88" lengthAdjust="spacingAndGlyphs">3.0000</text>
<path d="M2820 125H2943.7a6 6 0 0 1 6 6V161a6 6 0 0 1 -6 6H2820z" fill="#3179f5"/>
<text x="2846.5" y="156.5" font-size="29.5" fill="#fff" stroke="#fff" stroke-width="0.5" textLength="88" lengthAdjust="spacingAndGlyphs">3.1136</text>
<path d="M2820 167H2943.7a6 6 0 0 1 6 6V204a6 6 0 0 1 -6 6H2820z" fill="#26a69a"/>
<text x="2846.5" y="199.0" font-size="29.5" fill="#fff" stroke="#fff" stroke-width="0.5" textLength="88" lengthAdjust="spacingAndGlyphs">3.0505</text>
<path d="M2820 255.5H2943.7a6 6 0 0 1 6 6V293a6 6 0 0 1 -6 6H2820z" fill="#ffffff"/>
<text x="2846.5" y="287.75" font-size="29.5" fill="#000" stroke="#000" stroke-width="0.5" textLength="88" lengthAdjust="spacingAndGlyphs">2.6868</text>
<path d="M2820 299H2943.7a6 6 0 0 1 6 6V336a6 6 0 0 1 -6 6H2820z" fill="#ffffff"/>
<text x="2846.5" y="331.0" font-size="29.5" fill="#000" stroke="#000" stroke-width="0.5" textLength="88" lengthAdjust="spacingAndGlyphs">2.5977</text>
<path d="M2820 342H2943.7a6 6 0 0 1 6 6V378a6 6 0 0 1 -6 6H2820z" fill="#3179f5"/>
<text x="2846.5" y="373.5" font-size="29.5" fill="#fff" stroke="#fff" stroke-width="0.5" textLength="88" lengthAdjust="spacingAndGlyphs">2.4305</text>
<path d="M2820 488H2943.7a6 6 0 0 1 6 6V525.5a6 6 0 0 1 -6 6H2820z" fill="#3179f5"/>
<text x="2846.5" y="520.25" font-size="29.5" fill="#fff" stroke="#fff" stroke-width="0.5" textLength="88" lengthAdjust="spacingAndGlyphs">1.9251</text>
<path d="M2820 785H2943.7a6 6 0 0 1 6 6V822.5a6 6 0 0 1 -6 6H2820z" fill="#5b9cf6"/>
<text x="2846.5" y="817.25" font-size="29.5" fill="#000" stroke="#000" stroke-width="0.5" textLength="88" lengthAdjust="spacingAndGlyphs">1.2561</text>
<path d="M2820 960H2929a6 6 0 0 1 6 6V998a6 6 0 0 1 -6 6H2820z" fill="#3179f5"/>
<text x="2846.8" y="992.5" font-size="29.5" fill="#fff" stroke="#fff" stroke-width="0.5" textLength="72.6" lengthAdjust="spacingAndGlyphs">79.38</text>
<rect x="2846.5" y="83" width="87" height="46" rx="8" fill="#131722" stroke="#363a45" stroke-width="2.5"/>
<text x="2856" y="113.5" font-size="28" fill="#b2b5be" stroke="#b2b5be" stroke-width="0.5" textLength="69" lengthAdjust="spacingAndGlyphs">USDT</text>
<text x="2845.5" y="1090.5" font-size="29.5" fill="#b2b5be" stroke="#b2b5be" stroke-width="0.5" textLength="74" lengthAdjust="spacingAndGlyphs">40.00</text>
<text x="291" y="1198" font-size="28" fill="#b2b5be" stroke="#b2b5be" stroke-width="0.5" text-anchor="middle">15</text>
<text x="511.5" y="1198" font-size="28" fill="#b2b5be" stroke="#b2b5be" stroke-width="0.5" text-anchor="middle">23</text>
<text x="733" y="1198" font-size="28" fill="#b2b5be" stroke="#b2b5be" stroke-width="0.5" text-anchor="middle">Dec</text>
<text x="1065" y="1198" font-size="28" fill="#b2b5be" stroke="#b2b5be" stroke-width="0.5" text-anchor="middle">13</text>
<text x="1286" y="1198" font-size="28" fill="#b2b5be" stroke="#b2b5be" stroke-width="0.5" text-anchor="middle">21</text>
<text x="1590" y="1198" font-size="28" fill="#b2b5be" stroke="#b2b5be" stroke-width="0.5" text-anchor="middle" font-weight="bold">2022</text>
<text x="1838" y="1198" font-size="28" fill="#b2b5be" stroke="#b2b5be" stroke-width="0.5" text-anchor="middle">10</text>
<text x="2225" y="1198" font-size="28" fill="#b2b5be" stroke="#b2b5be" stroke-width="0.5" text-anchor="middle">24</text>
<text x="2446" y="1198" font-size="28" fill="#b2b5be" stroke="#b2b5be" stroke-width="0.5" text-anchor="middle">Feb</text>
<text x="2806" y="1198" font-size="28" fill="#b2b5be" stroke="#b2b5be" stroke-width="0.5" text-anchor="middle">14</text>
<path d="M24.9 1252.1H44.3V1276.9H34.6V1261.8H24.9Z" fill="#d1d4dc"/><circle cx="52.5" cy="1257.5" r="5.3" fill="#d1d4dc"/><path d="M62.7 1252.1H73.9L64.2 1276.9H53Z" fill="#d1d4dc"/>
<text x="82.6" y="1277.8" font-size="34.5" fill="#d1d4dc" stroke="#d1d4dc" stroke-width="0.5" textLength="176" lengthAdjust="spacingAndGlyphs">TradingView</text>
</svg></body></html>
